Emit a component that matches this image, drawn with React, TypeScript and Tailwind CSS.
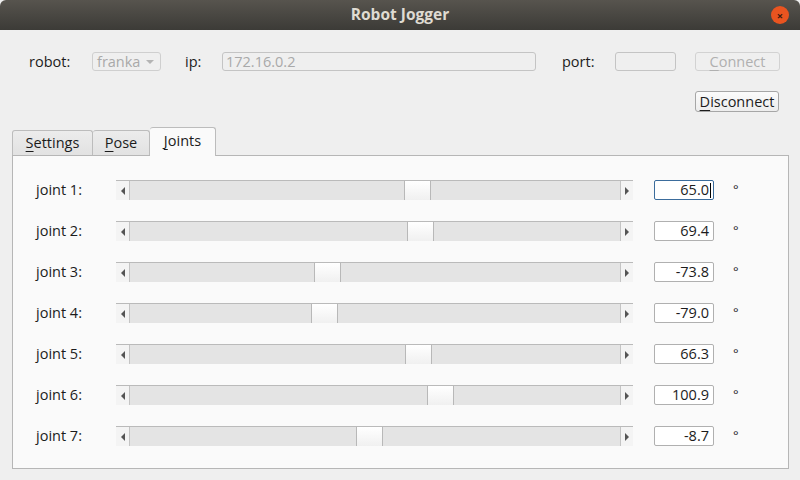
import React from "react";

const joints = [
  { name: "joint 1:", value: 65.0, focused: true },
  { name: "joint 2:", value: 69.4 },
  { name: "joint 3:", value: -73.8 },
  { name: "joint 4:", value: -79.0 },
  { name: "joint 5:", value: 66.3 },
  { name: "joint 6:", value: 100.9 },
  { name: "joint 7:", value: -8.7 },
];

function Slider({ value }: { value: number }) {
  // groove travel is 464px for -360..360 deg
  const left = 232 + (value / 360) * 232;
  return (
    <div className="flex h-[20px] w-[517px] border-t border-[#bababa] bg-[#f4f4f4]">
      <div className="flex w-[13px] items-center justify-center">
        <div className="h-0 w-0 border-y-[4px] border-r-[4px] border-y-transparent border-r-[#555]" />
      </div>
      <div className="relative flex-1 border-l border-[#c4c4c4] bg-[#e4e4e4]">
        <div
          className="absolute top-0 h-full w-[27px] border-x border-[#b8b8b8] bg-gradient-to-b from-white to-[#f0f0f0]"
          style={{ left }}
        />
      </div>
      <div className="flex w-[13px] items-center justify-center border-l border-[#c4c4c4]">
        <div className="h-0 w-0 border-y-[4px] border-l-[4px] border-y-transparent border-l-[#555]" />
      </div>
    </div>
  );
}

function Mn({ c }: { c: string }) {
  return <span className="underline decoration-1 underline-offset-[3px]">{c}</span>;
}

export default function App() {
  return (
    <div
      className="flex h-[480px] w-[800px] flex-col overflow-hidden bg-[#efefef] text-[14.5px] text-[#1c1c1c]"
      style={{ fontFamily: '"Open Sans", "DejaVu Sans", sans-serif' }}
    >
      {/* title bar */}
      <div className="relative flex h-[30px] shrink-0 items-center justify-center rounded-t-[6px] bg-gradient-to-b from-[#57544e] to-[#3c3b37]">
        <span className="text-[15.5px] font-bold text-[#dfdbd2]">Robot Jogger</span>
        <div className="absolute right-[11px] top-[6px] flex h-[18px] w-[18px] items-center justify-center rounded-full bg-[#e95420] text-[11px] font-bold leading-none text-[#3c1a0e]">
          ×
        </div>
      </div>

      {/* connection row */}
      <div className="mt-[22px] flex h-[19px] items-center pl-[29px]">
        <span className="w-[63px]">robot:</span>
        <div className="flex h-[19px] w-[69px] items-center justify-between rounded-[3px] border border-[#cfcfcf] pl-[4px] pr-[6px] text-[#a9a9a9]">
          <span>franka</span>
          <div className="h-0 w-0 border-x-[4px] border-t-[4px] border-x-transparent border-t-[#b4b4b4]" />
        </div>
        <span className="ml-[24px] w-[37px]">ip:</span>
        <div className="flex h-[19px] w-[314px] items-center rounded-[3px] border border-[#c4c4c4] px-[3px] text-[#a9a9a9]">
          172.16.0.2
        </div>
        <span className="ml-[26px] w-[53px]">port:</span>
        <div className="h-[19px] w-[61px] rounded-[3px] border border-[#c4c4c4]" />
        <div className="ml-[19px] flex h-[19px] w-[85px] items-center justify-center rounded-[3px] border border-[#d2d2d2] text-[#b0b0b0]">
          <span>
            <Mn c="C" />
            onnect
          </span>
        </div>
      </div>

      <div className="mt-[20px] flex justify-end pr-[21px]">
        <div className="flex h-[21px] w-[84px] items-center justify-center rounded-[3px] border border-[#a6a6a6] bg-gradient-to-b from-[#fbfbfb] to-[#ededed]">
          <span>
            <Mn c="D" />
            isconnect
          </span>
        </div>
      </div>

      {/* tabs */}
      <div className="ml-[12px] mt-[15px] flex h-[28px] items-end">
        <div className="flex h-[25px] w-[81px] items-center justify-center rounded-t-[3px] border border-b-0 border-[#bcbcbc] bg-gradient-to-b from-[#ececec] to-[#e2e2e2]">
          <span>
            <Mn c="S" />
            ettings
          </span>
        </div>
        <div className="flex h-[25px] w-[57px] items-center justify-center rounded-t-[3px] border border-b-0 border-l-0 border-[#bcbcbc] bg-gradient-to-b from-[#ececec] to-[#e2e2e2]">
          <span>
            <Mn c="P" />
            ose
          </span>
        </div>
        <div className="relative z-10 mb-[-1px] flex h-[29px] w-[66px] items-center justify-center rounded-t-[3px] border border-b-0 border-l-0 border-[#bcbcbc] bg-[#fafafa] pb-[3px]">
          <span>
            <Mn c="J" />
            oints
          </span>
        </div>
      </div>

      {/* pane */}
      <div className="ml-[12px] mr-[11px] flex h-[314px] flex-col gap-[21px] border border-[#b6b6b6] bg-[#fafafa] pl-[23px] pt-[24px]">
        {joints.map((j) => (
          <div key={j.name} className="flex h-[20px] items-center">
            <span className="w-[80px]">{j.name}</span>
            <Slider value={j.value} />
            <div
              className={
                j.focused
                  ? "ml-[21px] flex h-[20px] w-[60px] items-center justify-end rounded-[2px] border border-[#3b6c9c] bg-white pr-[2px]"
                  : "ml-[21px] flex h-[20px] w-[60px] items-center justify-end rounded-[2px] border border-[#b0b0b0] bg-white pr-[4px]"
              }
            >
              <span>{j.value.toFixed(1)}</span>
              {j.focused && <span className="ml-[1px] h-[15px] w-px bg-black" />}
            </div>
            <span className="ml-[19px] text-[13px]">°</span>
          </div>
        ))}
      </div>
    </div>
  );
}
